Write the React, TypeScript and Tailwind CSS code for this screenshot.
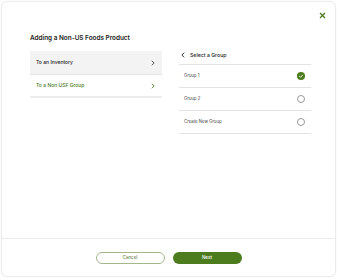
import React from "react";

function Chevron({ className }: { className?: string }) {
  return (
    <svg width="4" height="6" viewBox="0 0 5 8" className={className} fill="none" stroke="currentColor" strokeWidth="1.2">
      <path d="M1 1l3 3-3 3" />
    </svg>
  );
}

export default function App() {
  const groups = [
    { name: "Group 1", selected: true },
    { name: "Group 2", selected: false },
    { name: "Create New Group", selected: false },
  ];
  return (
    <div className="w-[339px] h-[280px] bg-white p-px" style={{ fontFamily: "Inter, 'Noto Sans', sans-serif" }}>
      <div className="w-[335px] h-[276px] rounded-[6px] border border-[#ececec] bg-white flex flex-col shadow-[0_0_2px_rgba(0,0,0,0.06)]">
        <div className="flex-1 flex flex-col">
          <div className="flex justify-end pt-[10px] pr-[9px]">
            <svg width="7" height="7" viewBox="0 0 7 7" stroke="#4d7c1f" strokeWidth="1.3">
              <path d="M1 1l5 5M6 1L1 6" />
            </svg>
          </div>
          <div className="pl-[28px] pt-[15px] text-[6.4px] font-semibold text-[#222] leading-[8px]">
            Adding a Non-US Foods Product
          </div>
          <div className="flex pl-[28px] pt-[9px] gap-[17px]">
            <div className="w-[132px] flex flex-col">
              <div className="h-[24px] bg-[#f3f3f3] border-b border-[#e3e3e3] flex items-center justify-between pl-[6px] pr-[7px] text-[5px] font-medium text-[#222]">
                <span>To an Inventory</span>
                <Chevron className="text-[#444]" />
              </div>
              <div className="h-[23px] border-b-2 border-[#ececec] flex items-center justify-between pl-[6px] pr-[7px] text-[5px] font-medium text-[#4d7c1f]">
                <span>To a Non USF Group</span>
                <Chevron className="text-[#4d7c1f]" />
              </div>
            </div>
            <div className="w-[132px] flex flex-col">
              <div className="h-[14px] border-b border-[#e3e3e3] flex items-start gap-[5px] pl-[2px] pt-[1px] text-[5.2px] leading-[6px] font-medium text-[#222]">
                <svg width="4" height="6" viewBox="0 0 5 8" fill="none" stroke="#333" strokeWidth="1.3">
                  <path d="M4 1L1 4l3 3" />
                </svg>
                <span>Select a Group</span>
              </div>
              {groups.map((g) => (
                <div key={g.name} className="h-[23px] border-b border-[#e3e3e3] flex items-center justify-between pl-[5px] pr-[6px] text-[4.3px] text-[#444]">
                  <span>{g.name}</span>
                  {g.selected ? (
                    <svg width="8" height="8" viewBox="0 0 8 8">
                      <circle cx="4" cy="4" r="4" fill="#4d7c1f" />
                      <path d="M2.3 4.1l1.2 1.2 2.3-2.4" stroke="white" strokeWidth="0.9" fill="none" />
                    </svg>
                  ) : (
                    <span className="w-[8px] h-[8px] rounded-full border border-[#999] box-border" />
                  )}
                </div>
              ))}
            </div>
          </div>
        </div>
        <div className="h-[38px] border-t border-[#ececec] flex items-start justify-center gap-[8px] pt-[13px]">
          <button className="w-[69px] h-[12px] rounded-full border border-[#a3b88a] bg-white text-[4.5px] text-[#4d6a2a] leading-none">
            Cancel
          </button>
          <button className="w-[69px] h-[12px] rounded-full bg-[#4d7c1f] text-[4.5px] text-white font-medium leading-none">
            Next
          </button>
        </div>
      </div>
    </div>
  );
}
